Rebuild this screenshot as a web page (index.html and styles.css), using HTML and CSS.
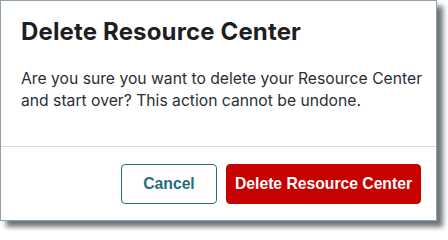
FILE: index.html
```html
<!DOCTYPE html>
<html>
<head>
<meta charset="utf-8">
<link rel="stylesheet" href="styles.css">
</head>
<body>
<div class="dialog">
  <div class="dialog-body">
    <h1 class="title">Delete Resource Center</h1>
    <p class="message">Are you sure you want to delete your Resource Center and start over? This action cannot be undone.</p>
  </div>
  <div class="dialog-footer">
    <button class="btn btn-secondary">Cancel</button>
    <button class="btn btn-danger">Delete Resource Center</button>
  </div>
</div>
</body>
</html>
```
FILE: styles.css
```css
html, body {
  margin: 0;
  padding: 0;
  background: #ffffff;
}
body {
  width: 448px;
  height: 231px;
  overflow: hidden;
}
.dialog {
  box-sizing: border-box;
  width: 437px;
  height: 221px;
  background: #ffffff;
  border: 1px solid #8ea1ae;
  box-shadow: 6px 6px 5px rgba(50, 60, 65, 0.7);
  display: flex;
  flex-direction: column;
}
.dialog-body {
  padding: 16px 10px 0 20px;
  height: 146px;
  box-sizing: border-box;
  border-bottom: 1px solid #d6dbe0;
}
.title {
  margin: 0;
  font-family: Inter, "Noto Sans", sans-serif;
  font-weight: 700;
  font-size: 24px;
  line-height: 30px;
  color: #1d1f23;
  letter-spacing: 0.15px;
}
.message {
  margin: 21px 0 0 0;
  font-family: Inter, "Noto Sans", sans-serif;
  font-size: 15.7px;
  line-height: 22px;
  color: #2b2e33;
}
.dialog-footer {
  display: flex;
  justify-content: flex-end;
  gap: 9px;
  padding: 17px 15px 0 0;
}
.btn {
  box-sizing: border-box;
  height: 40px;
  border-radius: 4px;
  font-family: "Liberation Sans", Arial, sans-serif;
  font-weight: 700;
  font-size: 15.7px;
  padding: 0;
  white-space: nowrap;
  cursor: pointer;
}
.btn-secondary {
  width: 96px;
  background: #ffffff;
  border: 1px solid #1f6f80;
  color: #1f6f80;
}
.btn-danger {
  width: 195px;
  background: #c80000;
  border: 1px solid #c80000;
  color: #ffffff;
}
```
